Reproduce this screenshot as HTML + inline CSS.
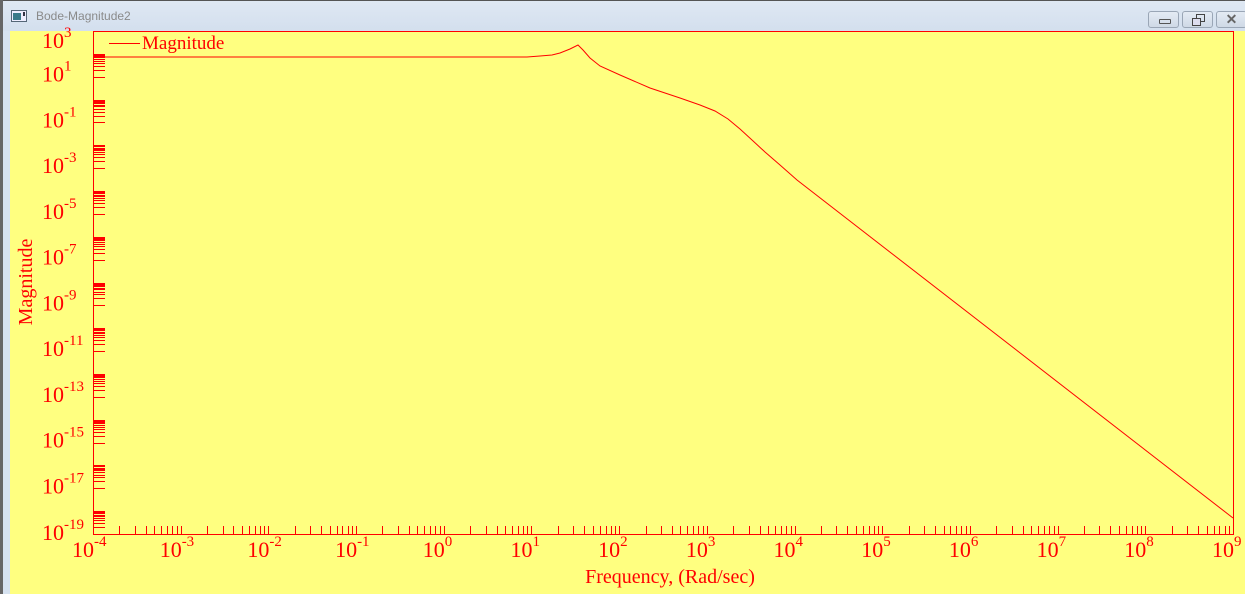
<!DOCTYPE html>
<html><head><meta charset="utf-8"><style>
html,body{margin:0;padding:0;width:1245px;height:594px;overflow:hidden;background:#d6e2f0}
#tb{position:absolute;left:0;top:0;width:1245px;height:31px;background:linear-gradient(#dfe8f3,#d3dfee);border-top:1px solid #555;box-sizing:border-box}
#tb .t{position:absolute;left:36px;top:8px;font:12px "Liberation Sans",sans-serif;color:#8a8a8a}
.btn{position:absolute;top:10px;height:17px;border:1px solid #9aa6b6;border-radius:3px;background:linear-gradient(#e4ebf4,#cfd9e6);box-sizing:border-box}
#lb{position:absolute;left:0;top:0;width:3px;height:594px;background:#666}
svg{position:absolute;left:0;top:0}
</style></head><body>
<div id="tb"><svg width="20" height="16" style="left:11px;top:9px"><rect x="0.5" y="0.5" width="15" height="11" fill="#eef" stroke="#567"/><rect x="2" y="3" width="8" height="7" fill="#3a7a8a"/><rect x="12" y="2" width="2" height="4" fill="#334"/></svg><span class="t">Bode-Magnitude2</span>
<div class="btn" style="left:1148px;width:31px"><div style="position:absolute;left:10px;top:7px;width:10px;height:3px;border:1px solid #555;border-radius:1px"></div></div>
<div class="btn" style="left:1182px;width:31px"><div style="position:absolute;left:13px;top:2px;width:7px;height:6px;border:1px solid #444"></div><div style="position:absolute;left:9px;top:6px;width:7px;height:6px;border:1px solid #444;background:#dde"></div></div>
<div class="btn" style="left:1216px;width:31px;font:bold 14px 'Liberation Sans',sans-serif;color:#666;text-align:center;line-height:15px">✕</div>
</div>
<div id="lb"></div>
<svg id="p" width="1245" height="594" style="top:0" font-family="Liberation Serif, serif" fill="#f00">
<rect x="10" y="31" width="1235" height="563" fill="#ffff80"/>
<rect x="93.5" y="31.5" width="1140" height="503" fill="none" stroke="#f00"/>
<line x1="109" y1="43.5" x2="140" y2="43.5" stroke="#f00"/>
<text x="142" y="49" font-size="19">Magnitude</text>
<polyline fill="none" stroke="#f00" points="93,57 527,57 540,56 552,55 560,53 570,49 578,45 583,50 590,58 600,66 620,75 650,88 680,98 700,105 715,111 728,119 740,129 752,140 765,152 780,165 797,180 1233,518"/>
<g id="g"></g>
<text x="670" y="583" font-size="20" text-anchor="middle">Frequency, (Rad/sec)</text>
<text transform="translate(32,282) rotate(-90)" font-size="20" text-anchor="middle">Magnitude</text>
</svg>
<script>
(function(){
var g=document.getElementById('g'),s='';
var dx=1140/13, dy=503/22;
for(var d=0;d<13;d++){for(var m=2;m<=10;m++){var x=93+(d+Math.log10(m))*dx;x=Math.round(x)+0.5;s+='<line x1="'+x+'" y1="526" x2="'+x+'" y2="534" stroke="#f00"/>';}}
for(var d=0;d<=13;d++){var x=93+d*dx;var e=d-4;s+='<text x="'+(x+1)+'" y="557" font-size="22" text-anchor="end">10</text><text x="'+(x+1)+'" y="546" font-size="15">'+e+'</text>';}
for(var k=0;k<11;k++){var tp=31+(2*k+1)*dy;for(var m=1;m<=10;m++){var y=tp+(1-Math.log10(m))*dy;y=Math.round(y)+0.5;s+='<line x1="93" y1="'+y+'" x2="105" y2="'+y+'" stroke="#f00"/>';}}
for(var k=0;k<=11;k++){var y=31+2*k*dy;var e=3-2*k;var yb=y+5;if(k==0)yb=48;if(k==11)yb=540;s+='<text x="64" y="'+yb+'" font-size="22" text-anchor="end">10</text><text x="64" y="'+(yb-11)+'" font-size="15">'+e+'</text>';}
g.innerHTML=s;
})();
</script>
</body></html>
